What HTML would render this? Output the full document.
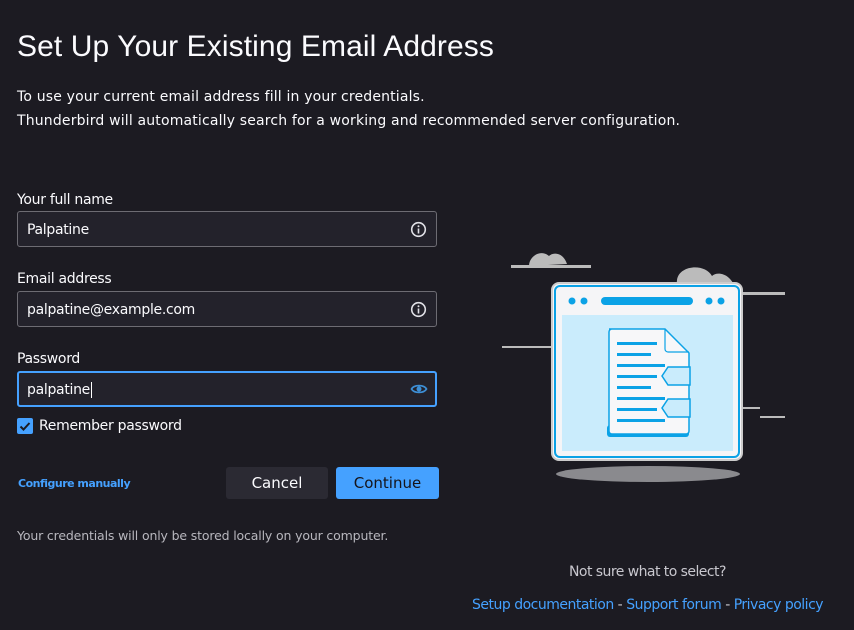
<!DOCTYPE html>
<html><head><style>
*{margin:0;padding:0;box-sizing:border-box}
body{width:854px;height:630px;background:#1c1b22;color:#fbfbfe;font-family:"DejaVu Sans","Liberation Sans",sans-serif;position:relative;overflow:hidden}
.a{position:absolute;white-space:nowrap}
h1{position:absolute;left:17px;top:30px;font-family:"Liberation Sans",sans-serif;font-weight:300;font-size:30px;letter-spacing:0.1px;color:#fbfbfe}
.p{font-size:14px;letter-spacing:0.17px}
.lbl{font-size:14px;letter-spacing:-0.3px}
.in{position:absolute;left:17px;width:420px;height:36px;background:#23222b;border:1px solid #6d6c73;border-radius:3px;font-size:14px;padding:0 9px;line-height:36px;letter-spacing:-0.3px}
.btn{position:absolute;top:467px;height:32px;border-radius:3px;font-size:15px;text-align:center;line-height:32px}
a{color:#45a1ff;text-decoration:none}
</style></head><body>
<h1>Set Up Your Existing Email Address</h1>
<div class="a p" style="left:17px;top:89px">To use your current email address fill in your credentials.</div>
<div class="a p" style="left:17px;top:113px">Thunderbird will automatically search for a working and recommended server configuration.</div>

<div class="a lbl" style="left:17px;top:192px">Your full name</div>
<div class="in" style="top:211px">Palpatine</div>
<div class="a lbl" style="left:17px;top:271px">Email address</div>
<div class="in" style="top:291px">palpatine@example.com</div>
<div class="a lbl" style="left:17px;top:351px">Password</div>
<div class="in" style="top:371px;border:2px solid #45a1ff;padding-left:8px;line-height:34px">palpatine<span style="border-left:1px solid #fff;margin-left:1px"></span></div>

<svg class="a" style="left:410px;top:221px" width="17" height="17" viewBox="0 0 17 17"><circle cx="8.5" cy="8.5" r="6.8" fill="none" stroke="#e0e0e6" stroke-width="1.6"/><rect x="7.7" y="7.5" width="1.6" height="5" fill="#e0e0e6"/><circle cx="8.5" cy="5.3" r="1" fill="#e0e0e6"/></svg>
<svg class="a" style="left:410px;top:301px" width="17" height="17" viewBox="0 0 17 17"><circle cx="8.5" cy="8.5" r="6.8" fill="none" stroke="#e0e0e6" stroke-width="1.6"/><rect x="7.7" y="7.5" width="1.6" height="5" fill="#e0e0e6"/><circle cx="8.5" cy="5.3" r="1" fill="#e0e0e6"/></svg>
<svg class="a" style="left:410px;top:381px" width="18" height="16" viewBox="0 0 18 16"><path d="M1.5 8C4 3.5 14 3.5 16.5 8C14 12.5 4 12.5 1.5 8Z" fill="none" stroke="#3d8fd6" stroke-width="1.8"/><circle cx="9" cy="8" r="2.5" fill="#3d8fd6"/></svg>

<div class="a" style="left:17px;top:418px;width:16px;height:16px;background:#45a1ff;border-radius:2px"><svg width="16" height="16"><path d="M3.5 8.5l3 3 6-6.5" fill="none" stroke="#1c1b22" stroke-width="2"/></svg></div>
<div class="a lbl" style="left:39px;top:418px">Remember password</div>

<div class="a" style="left:18px;top:477px;font-size:11px;font-weight:bold;letter-spacing:-0.5px"><a>Configure manually</a></div>
<div class="btn" style="left:226px;width:102px;background:#2b2a33;color:#fbfbfe">Cancel</div>
<div class="btn" style="left:336px;width:103px;background:#45a1ff;color:#15141a">Continue</div>
<div class="a" style="left:17px;top:528px;font-size:12.5px;color:#b8b7be;letter-spacing:-0.15px">Your credentials will only be stored locally on your computer.</div>

<svg class="a" style="left:495px;top:235px" width="300" height="250" viewBox="0 0 300 250">
<g fill="#bbb"><path d="M34 31c0-10 12-17 20-10c4-4 14-4 18 8z"/><rect x="16" y="30" width="80" height="3"/>
<path d="M182 45c2-15 28-17 35 -4c5-5 20-3 24 15h-60z"/><rect x="240" y="57" width="50" height="3"/>
<rect x="7" y="111" width="60" height="2"/><rect x="245" y="172" width="20" height="2"/><rect x="265" y="181" width="25" height="2"/></g>
<ellipse cx="153" cy="239" rx="92" ry="8" fill="#8a8a8e"/>
<rect x="57" y="48" width="190" height="177" rx="7" fill="#f5f5f7" stroke="#ccc" stroke-width="2"/>
<rect x="60" y="51" width="184" height="171" rx="5" fill="none" stroke="#0ba2e6" stroke-width="2"/>
<rect x="67" y="80" width="171" height="136" fill="#caecfc"/>
<g fill="#0ba2e6"><circle cx="77" cy="66" r="3.5"/><circle cx="89" cy="66" r="3.5"/><circle cx="214" cy="66" r="3.5"/><circle cx="226" cy="66" r="3.5"/><rect x="106" y="62" width="92" height="8" rx="4"/>
<rect x="112" y="190" width="82" height="12" rx="3"/></g>
<path d="M114 94h56l24 24v78a3 3 0 0 1-3 3h-74a3 3 0 0 1-3-3v-99a3 3 0 0 1 3-3z" fill="#f7f7f9" stroke="#0ba2e6" stroke-width="1.5"/>
<path d="M170 94v20a3 3 0 0 0 3 3h21" fill="none" stroke="#0ba2e6" stroke-width="1.2"/>
<g fill="#0ba2e6"><rect x="122" y="107" width="40" height="3"/><rect x="122" y="118" width="34" height="3"/><rect x="122" y="129" width="48" height="3"/><rect x="122" y="140" width="40" height="3"/><rect x="122" y="151" width="34" height="3"/><rect x="122" y="162" width="48" height="3"/><rect x="122" y="173" width="40" height="3"/><rect x="122" y="184" width="48" height="3"/></g>
<g fill="#caecfc" stroke="#0ba2e6" stroke-width="1.5"><path d="M173 132h22v18h-22l-6-9z"/><path d="M173 164h22v18h-22l-6-9z"/></g>
</svg>

<div class="a" style="left:569px;top:564px;font-size:14px;color:#c8c7ce;letter-spacing:-0.55px">Not sure what to select?</div>
<div class="a" style="left:472px;top:597px;font-size:14px;color:#c8c7ce;letter-spacing:-0.5px"><a>Setup documentation</a> - <a>Support forum</a> - <a>Privacy policy</a></div>
</body></html>
